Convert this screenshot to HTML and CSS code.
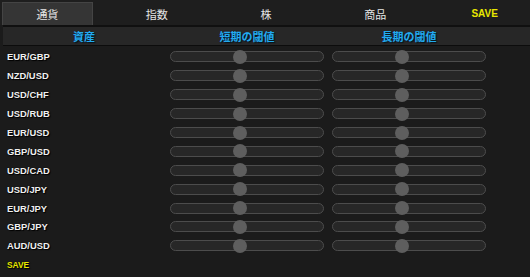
FILE: index.html
```html
<!DOCTYPE html>
<html lang="ja">
<head>
<meta charset="utf-8">
<link rel="stylesheet" href="styles.css">
</head>
<body>
<div class="tabs">
  <div class="tab active">通貨</div>
  <div class="tab">指数</div>
  <div class="tab">株</div>
  <div class="tab">商品</div>
  <div class="tab save">SAVE</div>
</div>
<div class="head">
  <div class="hcell first">資産</div>
  <div class="hcell">短期の閾値</div>
  <div class="hcell">長期の閾値</div>
</div>
<div class="rows">
  <div class="row"><div class="label">EUR/GBP</div><div class="track"><span class="thumb"></span></div><div class="track"><span class="thumb"></span></div></div>
  <div class="row"><div class="label">NZD/USD</div><div class="track"><span class="thumb"></span></div><div class="track"><span class="thumb"></span></div></div>
  <div class="row"><div class="label">USD/CHF</div><div class="track"><span class="thumb"></span></div><div class="track"><span class="thumb"></span></div></div>
  <div class="row"><div class="label">USD/RUB</div><div class="track"><span class="thumb"></span></div><div class="track"><span class="thumb"></span></div></div>
  <div class="row"><div class="label">EUR/USD</div><div class="track"><span class="thumb"></span></div><div class="track"><span class="thumb"></span></div></div>
  <div class="row"><div class="label">GBP/USD</div><div class="track"><span class="thumb"></span></div><div class="track"><span class="thumb"></span></div></div>
  <div class="row"><div class="label">USD/CAD</div><div class="track"><span class="thumb"></span></div><div class="track"><span class="thumb"></span></div></div>
  <div class="row"><div class="label">USD/JPY</div><div class="track"><span class="thumb"></span></div><div class="track"><span class="thumb"></span></div></div>
  <div class="row"><div class="label">EUR/JPY</div><div class="track"><span class="thumb"></span></div><div class="track"><span class="thumb"></span></div></div>
  <div class="row"><div class="label">GBP/JPY</div><div class="track"><span class="thumb"></span></div><div class="track"><span class="thumb"></span></div></div>
  <div class="row"><div class="label">AUD/USD</div><div class="track"><span class="thumb"></span></div><div class="track"><span class="thumb"></span></div></div>
  <div class="row"><div class="label save-link">SAVE</div></div>
</div>
</body>
</html>
```

FILE: styles.css
```css
html, body {
  margin: 0;
  padding: 0;
  background: #1b1b1b;
  width: 530px;
  height: 277px;
  overflow: hidden;
  font-family: "Liberation Sans", Arial, "Noto Sans CJK JP", sans-serif;
}

.tabs {
  display: flex;
  gap: 18.6px;
  height: 23px;
  padding: 2px 0 0 2px;
  background: #1e1e1e;
}

.tab {
  width: 93px;
  height: 23px;
  box-sizing: border-box;
  display: flex;
  align-items: center;
  justify-content: center;
  color: #e6e6e6;
  font-size: 11px;
  font-family: "Noto Sans CJK JP", sans-serif;
}

.tab.active {
  background: #353535;
  border: 1px solid #444;
  border-bottom: none;
}

.tab.save {
  font-family: "Liberation Sans", Arial, sans-serif;
  font-weight: bold;
  font-size: 10px;
  color: #e8e800;
}

.head {
  display: grid;
  grid-template-columns: 159px 154px 154px;
  column-gap: 8px;
  margin-left: 3px;
  height: 18px;
  border-top: 2px solid #101010;
  border-bottom: 1px solid #0c0c0c;
  background: #272727;
  align-items: center;
}

.hcell {
  text-align: center;
  color: #22aaf0;
  font-weight: bold;
  font-size: 11px;
  font-family: "Noto Sans CJK JP", sans-serif;
  line-height: 18px;
  text-shadow: 1px 1px 1px #04121c;
}

.hcell.first {
  padding-left: 3px;
}

.rows {
  padding-top: 1.5px;
}

.row {
  display: grid;
  grid-template-columns: 162px 154px 154px;
  column-gap: 8px;
  height: 18.9px;
  align-items: center;
}

.label {
  padding-left: 7px;
  color: #f0f0f0;
  font-weight: bold;
  font-size: 9.4px;
  text-shadow: 0 0 1px #000, 1px 1px 1px #000;
}

.label.save-link {
  color: #e8e800;
  font-size: 8.4px;
}

.track {
  position: relative;
  height: 11px;
  box-sizing: border-box;
  border: 1px solid #4c4c4c;
  border-radius: 6px;
  background: #272727;
}

.thumb {
  position: absolute;
  left: 62px;
  top: -2.5px;
  width: 14px;
  height: 14px;
  border-radius: 50%;
  background: #5e5e5e;
}
```
